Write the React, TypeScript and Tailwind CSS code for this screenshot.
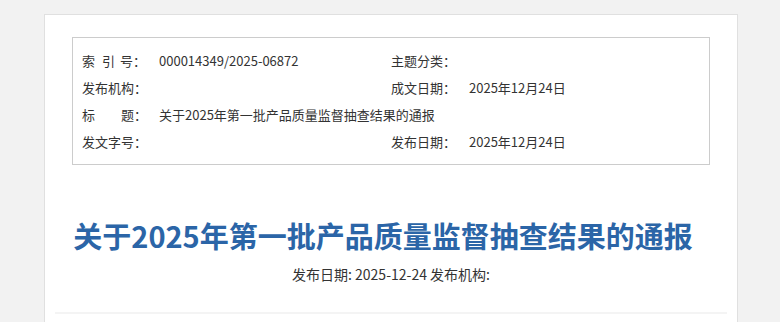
import React from 'react';

const rows: { l1: React.ReactNode; v1: string; l2: string; v2: string }[] = [
  {
    l1: (
      <>
        <span className="mr-[7px]">索</span>
        <span className="mr-[5px]">引</span>号：
      </>
    ),
    v1: '000014349/2025-06872',
    l2: '主题分类：',
    v2: '',
  },
  { l1: '发布机构：', v1: '', l2: '成文日期：', v2: '2025年12月24日' },
  { l1: '标　　题：', v1: '关于2025年第一批产品质量监督抽查结果的通报', l2: '', v2: '' },
  { l1: '发文字号：', v1: '', l2: '发布日期：', v2: '2025年12月24日' },
];

export default function App() {
  return (
    <div
      className="h-[322px] overflow-hidden bg-[#f2f2f2] pt-[14px]"
      style={{ fontFamily: '"Noto Sans CJK SC", "Noto Sans", sans-serif' }}
    >
      <div className="ml-[44px] h-[320px] w-[694px] border border-[#e0e0e0] bg-white px-[27px] pt-[22px]">
        {/* Info table */}
        <div className="border border-[#cccccc] py-[9px] pl-[9px] text-[13px] leading-[27px] text-[#333]">
          {rows.map((r, i) => (
            <div key={i} className="grid grid-cols-[77px_232px_78px_1fr]">
              <div className="whitespace-pre">{r.l1}</div>
              <div className="whitespace-nowrap">{r.v1}</div>
              <div>{r.l2}</div>
              <div>{r.v2}</div>
            </div>
          ))}
        </div>

        {/* Title */}
        <h1 className="mt-[50px] pr-[16px] text-center text-[29px] font-bold leading-[40px] text-[#2b65a7]">
          关于2025年第一批产品质量监督抽查结果的通报
        </h1>
        <div className="mt-[9px] text-center text-[14px] leading-[20px] text-[#333]">
          发布日期: 2025-12-24 发布机构:
        </div>

        <div className="mx-[-17px] mt-[28px] h-[2px] bg-[#f4f4f4]" />
      </div>
    </div>
  );
}
